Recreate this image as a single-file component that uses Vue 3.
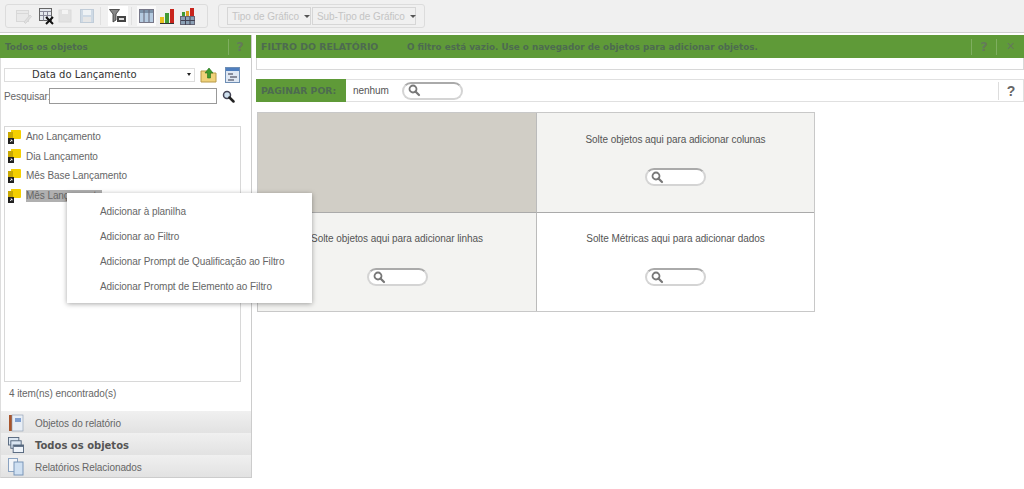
<script setup>
const objects = ['Ano Lançamento', 'Dia Lançamento', 'Mês Base Lançamento', 'Mês Lançamento']
const menuItems = [
  'Adicionar à planilha',
  'Adicionar ao Filtro',
  'Adicionar Prompt de Qualificação ao Filtro',
  'Adicionar Prompt de Elemento ao Filtro',
]
</script>

<template>
  <div class="page">
    <div class="toolbar">
      <div class="tool-group first">
        <svg class="tool t1" width="16" height="18" viewBox="0 0 16 18"><rect x=".5" y="3.500" width="12" height="11" fill="#e9e9e9" stroke="#d8d8d8"/><path d="M1 6.500h11" stroke="#d8d8d8"/><path d="M8 15l6-7 1.500 1.500-6 7z" fill="#e0e0e0" stroke="#d4d4d4"/></svg>
        <svg class="tool t2" width="16" height="18" viewBox="0 0 16 18"><rect x=".5" y="1.500" width="12" height="12" fill="#e4e8ee" stroke="#666"/><path d="M1 4.500h11M4.500 4.500v9M8.500 4.500v9M1 8.500h11" stroke="#889"/><path d="M7 10l7 7M14 10l-7 7" stroke="#111" stroke-width="2"/></svg>
        <svg class="tool t3" width="15" height="18" viewBox="0 0 15 18"><rect x="1" y="3" width="12" height="12" fill="#e2e2e2" stroke="#dadada"/><rect x="4" y="3" width="6" height="4" fill="#f4f4f4"/></svg>
        <svg class="tool t4" width="14" height="18" viewBox="0 0 14 18"><rect x=".5" y="2.500" width="13" height="13" fill="#cfdae5" stroke="#c0ccd8"/><rect x="3" y="3" width="8" height="5" fill="#eef2f5"/><rect x="3" y="10" width="8" height="5" fill="#e6e6e6"/></svg>
        <span class="sep sep-a"></span>
        <span class="tool-box filter-box">
          <svg width="18" height="14" viewBox="0 0 18 14"><path d="M.5.500h10L7 5v6L4 13V5z" fill="#888" stroke="#333" stroke-width=".8"/><rect x="8" y="7" width="9" height="6" fill="#444"/><rect x="10" y="9" width="5" height="2" fill="#ddd"/></svg>
        </span>
        <span class="sep sep-b"></span>
        <span class="tool-box">
          <svg width="15" height="14" viewBox="0 0 15 14"><rect x=".5" y=".5" width="14" height="13" fill="#b5cbe0" stroke="#778"/><rect x="1" y="1" width="13" height="3" fill="#7d93a9"/><path d="M5 1v12M10 1v12" stroke="#667"/></svg>
        </span>
        <svg class="tool t5" width="14" height="16" viewBox="0 0 14 16"><rect x="0" y="9" width="4" height="6" fill="#e8c020"/><rect x="5" y="5" width="4" height="10" fill="#3f9a35"/><rect x="10" y="1" width="4" height="14" fill="#c8241c"/><path d="M0 15.500h14" stroke="#333"/></svg>
        <svg class="tool t6" width="15" height="17" viewBox="0 0 15 17"><rect x=".5" y="8.500" width="14" height="8" fill="#8ba0b5" stroke="#667"/><path d="M1 12.500h14M5.500 9v8M10 9v8" stroke="#445"/><rect x="2" y="4" width="3" height="4" fill="#3f9a35"/><rect x="6" y="3" width="3" height="5" fill="#e0a020"/><rect x="10" y="0" width="4" height="8" fill="#c8241c"/></svg>
      </div>
      <div class="tool-group second">
        <span class="chart-select first-select">Tipo de Gráfico<i class="caret"></i></span>
        <span class="chart-select second-select">Sub-Tipo de Gráfico<i class="caret"></i></span>
      </div>
    </div>

    <div class="main">
      <aside class="left">
        <div class="green-bar left-head">
          <span class="green-title">Todos os objetos</span>
          <span class="bar-help">?</span>
        </div>
        <div class="left-controls">
          <div class="ctrl-row">
            <div class="dropdown">Data do Lançamento<i class="small-caret"></i></div>
            <svg class="folder" width="17" height="16" viewBox="0 0 17 16"><path d="M1 4h6l1 2h8v9H1z" fill="#f0d27a" stroke="#b89a48"/><path d="M9 1l4 5h-2.500v5h-3V6H5z" fill="#3e9a2c" stroke="#24701a" stroke-width=".6"/></svg>
            <svg class="tree" width="15" height="16" viewBox="0 0 15 16"><rect x=".5" y=".5" width="14" height="15" fill="#dfe8f4" stroke="#6f8fb5"/><rect x="1" y="1" width="13" height="3" fill="#4f7fbf"/><path d="M3 7h5M5 10h7M3 13h6" stroke="#334" stroke-width="1"/></svg>
          </div>
          <div class="ctrl-row search-row">
            <label class="search-label">Pesquisar:</label>
            <div class="search-input"></div>
            <svg class="loupe" width="13" height="13" viewBox="0 0 13 13"><circle cx="5" cy="5" r="3.500" fill="#cfe0ee" stroke="#445" stroke-width="1.500"/><path d="M7.500 7.500l4 4" stroke="#222" stroke-width="2.500" stroke-linecap="round"/></svg>
          </div>
        </div>
        <div class="object-list">
          <div v-for="(item, i) in objects" :key="item" class="object-row">
            <svg width="15" height="16" viewBox="0 0 15 16"><path d="M4 1h9a1 1 0 0 1 1 1v7a1 1 0 0 1-1 1H4z" fill="#f4cf00"/><rect x="1" y="3" width="5" height="12" fill="#c9a800"/><rect x="1" y="9" width="6" height="6" fill="#222"/><path d="M3 13l2-2m-1.500 0H5v1.500" stroke="#fff" stroke-width=".8" fill="none"/></svg>
            <span class="object-name" :class="{ selected: i === 3 }">{{ item }}</span>
          </div>
        </div>
        <div class="count">4 item(ns) encontrado(s)</div>
        <div class="tabs">
          <div class="tab">
            <svg width="16" height="18" viewBox="0 0 16 18"><rect x="1" y="1" width="14" height="16" fill="#a8552c"/><rect x="4" y="1" width="11" height="16" fill="#e8eef6" stroke="#8a9ab0" stroke-width=".6"/><rect x="7" y="4" width="6" height="4" fill="#7f9fd0"/></svg>
            <span>Objetos do relatório</span>
          </div>
          <div class="tab strong">
            <svg width="16" height="16" viewBox="0 0 17 17"><rect x=".5" y=".5" width="11" height="8" fill="#dbe6f2" stroke="#55677d"/><rect x="3" y="4" width="11" height="8" fill="#dbe6f2" stroke="#55677d"/><rect x="5.500" y="8.500" width="11" height="8" fill="#eef3f9" stroke="#55677d"/><path d="M6 9.500h10" stroke="#55677d" stroke-width="2"/></svg>
            <span>Todos os objetos</span>
          </div>
          <div class="tab">
            <svg width="16" height="18" viewBox="0 0 16 18"><rect x=".5" y=".5" width="9" height="13" fill="#f2f5f9" stroke="#8aa2c0"/><rect x="6" y="4" width="9" height="13" fill="#cfe0f2" stroke="#7a96b8"/></svg>
            <span>Relatórios Relacionados</span>
          </div>
        </div>

        <div class="context-menu">
          <div v-for="item in menuItems" :key="item" class="menu-item">{{ item }}</div>
        </div>
      </aside>

      <section class="right">
        <div class="green-bar filter-head">
          <span class="green-title caps">FILTRO DO RELATÓRIO</span>
          <span class="green-title filter-msg">O filtro está vazio. Use o navegador de objetos para adicionar objetos.</span>
          <span class="bar-help push">?</span>
          <span class="bar-help close">✕</span>
        </div>
        <div class="filter-body"></div>
        <div class="pager">
          <span class="pager-label">PAGINAR POR:</span>
          <span class="pager-value">nenhum</span>
          <span class="pill pager-pill">
            <svg width="13" height="13" viewBox="0 0 13 13"><circle cx="5" cy="5" r="3.500" fill="none" stroke="#777" stroke-width="1.800"/><path d="M7.500 7.500l3.500 3.500" stroke="#777" stroke-width="2.200" stroke-linecap="round"/></svg>
          </span>
          <span class="pager-help">?</span>
        </div>
        <div class="drop-grid">
          <div class="cell corner"></div>
          <div class="cell soft">
            <p>Solte objetos aqui para adicionar colunas</p>
            <span class="pill">
              <svg width="13" height="13" viewBox="0 0 13 13"><circle cx="5" cy="5" r="3.500" fill="none" stroke="#777" stroke-width="1.800"/><path d="M7.500 7.500l3.500 3.500" stroke="#777" stroke-width="2.200" stroke-linecap="round"/></svg>
            </span>
          </div>
          <div class="cell soft">
            <p>Solte objetos aqui para adicionar linhas</p>
            <span class="pill">
              <svg width="13" height="13" viewBox="0 0 13 13"><circle cx="5" cy="5" r="3.500" fill="none" stroke="#777" stroke-width="1.800"/><path d="M7.500 7.500l3.500 3.500" stroke="#777" stroke-width="2.200" stroke-linecap="round"/></svg>
            </span>
          </div>
          <div class="cell">
            <p>Solte Métricas aqui para adicionar dados</p>
            <span class="pill">
              <svg width="13" height="13" viewBox="0 0 13 13"><circle cx="5" cy="5" r="3.500" fill="none" stroke="#777" stroke-width="1.800"/><path d="M7.500 7.500l3.500 3.500" stroke="#777" stroke-width="2.200" stroke-linecap="round"/></svg>
            </span>
          </div>
        </div>
      </section>
    </div>
  </div>
</template>

<style>
html, body {
  margin: 0;
  background: #fff;
  overflow: hidden;
}
</style>

<style scoped>
.page {
  width: 1024px;
  height: 489px;
  font-family: "Liberation Sans", Arial, sans-serif;
  font-size: 10px;
  letter-spacing: -0.07px;
  color: #555;
  display: flex;
  flex-direction: column;
}

.toolbar {
  height: 33px;
  box-sizing: border-box;
  background: #f0f0f0;
  border-bottom: 1px solid #cfcfcf;
  display: flex;
  padding: 4px 0 0 5px;
  flex-shrink: 0;
}

.tool-group {
  height: 24px;
  box-sizing: border-box;
  border: 1px solid #dcdcdc;
  border-radius: 3px;
  display: flex;
  align-items: center;
}

.tool-group.first {
  width: 203px;
  padding-left: 10px;
}

.tool-group.second {
  width: 207px;
  margin-left: 10px;
  padding-left: 8px;
}

.tool {
  flex-shrink: 0;
}

.t2 { margin-left: 7px; }
.t3 { margin-left: 3px; }
.t4 { margin-left: 7px; }
.t5 { margin-left: 4px; }
.t6 { margin-left: 6px; }

.sep {
  width: 1px;
  height: 18px;
  background: #e0e0e0;
}

.sep-a { margin: 0 7px 0 6px; }
.sep-b { margin: 0 5px 0 3px; }

.tool-box {
  width: 19px;
  height: 20px;
  display: flex;
  align-items: center;
  justify-content: center;
  background: #fbfbfb;
}

.filter-box {
  width: 20px;
  background: #fff;
}

.chart-select {
  height: 18px;
  box-sizing: border-box;
  border: 1px solid #d6d6d6;
  color: #c4c4c4;
  display: flex;
  align-items: center;
  padding-left: 4px;
  gap: 5px;
  white-space: nowrap;
}

.first-select {
  width: 84px;
}

.second-select {
  width: 104px;
  margin-left: 1px;
}

.caret {
  border: 3px solid transparent;
  border-top: 3px solid #555;
  border-bottom: 0;
}

.main {
  flex: 1;
  display: flex;
  padding-top: 2px;
  min-height: 0;
}

.left {
  position: relative;
  width: 252px;
  height: 443px;
  box-sizing: border-box;
  border-right: 1px solid #ccc;
  border-left: 1px solid #ddd;
  border-bottom: 1px solid #ccc;
  display: flex;
  flex-direction: column;
  flex-shrink: 0;
}

.green-bar {
  background: #5f9a38;
  height: 23px;
  display: flex;
  align-items: center;
  flex-shrink: 0;
}

.left-head {
  margin-left: -1px;
  padding-left: 5px;
  justify-content: space-between;
}

.green-title {
  font-family: "DejaVu Sans", sans-serif;
  font-size: 8.8px;
  letter-spacing: 0;
  color: #4d6b50;
  font-weight: 700;
  white-space: nowrap;
}

.bar-help {
  color: #647a5a;
  font-family: "DejaVu Sans", sans-serif;
  font-size: 13px;
  font-weight: 700;
  width: 22px;
  text-align: center;
  border-left: 1px solid #7fae60;
  line-height: 16px;
}

.left-controls {
  padding: 9px 0 0 3px;
}

.ctrl-row {
  display: flex;
  align-items: center;
}

.dropdown {
  position: relative;
  width: 191px;
  height: 14px;
  box-sizing: border-box;
  border: 1px solid #ddd;
  font-family: "DejaVu Sans", sans-serif;
  font-size: 10px;
  letter-spacing: 0;
  color: #333;
  padding-left: 27px;
  line-height: 12px;
}

.small-caret {
  position: absolute;
  right: 3px;
  top: 4px;
  border: 2px solid transparent;
  border-top: 3px solid #222;
  border-bottom: 0;
}

.folder {
  margin-left: 5px;
}

.tree {
  margin-left: 8px;
}

.search-row {
  margin-top: 5px;
}

.search-label {
  color: #666;
  width: 45px;
  white-space: nowrap;
}

.search-input {
  width: 168px;
  height: 16px;
  box-sizing: border-box;
  border: 1px solid #999;
  background: #fff;
}

.loupe {
  margin-left: 5px;
}

.object-list {
  margin: 22px 0 0 3px;
  width: 237px;
  height: 256px;
  box-sizing: border-box;
  border: 1px solid #d8d8d8;
  flex-shrink: 0;
}

.object-row {
  height: 19.600px;
  display: flex;
  align-items: center;
  gap: 4px;
  padding-left: 2px;
  color: #666;
}

.object-name.selected {
  background: #b0b0b0;
  line-height: 12px;
  white-space: nowrap;
}

.count {
  padding: 6px 0 0 8px;
  height: 25px;
  color: #666;
}

.tabs {
  margin-top: auto;
}

.tab {
  height: 22px;
  box-sizing: border-box;
  padding: 2px 0 0 7px;
  display: flex;
  align-items: center;
  gap: 11px;
  color: #666;
  background: linear-gradient(#f0f0f0, #e2e2e2);
}

.tab.strong {
  font-family: "DejaVu Sans", sans-serif;
  font-size: 10px;
  letter-spacing: 0;
  font-weight: 700;
  color: #555;
}

.context-menu {
  position: absolute;
  left: 66px;
  top: 158px;
  width: 245px;
  height: 110px;
  box-sizing: border-box;
  padding-top: 6px;
  background: #fff;
  box-shadow: 0 1px 5px rgba(0, 0, 0, 0.35);
}

.menu-item {
  height: 25px;
  line-height: 25px;
  padding-left: 33px;
  color: #666;
  white-space: nowrap;
}

.right {
  flex: 1;
  margin-left: 4px;
  min-width: 0;
  display: flex;
  flex-direction: column;
}

.filter-head {
  padding-left: 5px;
}

.caps {
  width: 146px;
  font-size: 9.400px;
}

.push {
  margin-left: auto;
  width: 24px;
}

.close {
  font-size: 11px;
  width: 27px;
}

.filter-body {
  height: 11px;
  border: 1px solid #d8d8d8;
  border-top: 0;
  flex-shrink: 0;
}

.pager {
  margin-top: 9px;
  height: 23px;
  box-sizing: border-box;
  border: 1px solid #e0e0e0;
  border-left: 0;
  display: flex;
  align-items: center;
  flex-shrink: 0;
}

.pager-label {
  background: #5f9a38;
  font-family: "DejaVu Sans", sans-serif;
  font-size: 9.300px;
  letter-spacing: 0;
  color: #4d6b50;
  font-weight: 700;
  width: 90px;
  height: 23px;
  line-height: 23px;
  padding-left: 5px;
  box-sizing: border-box;
  white-space: nowrap;
}

.pager-value {
  color: #555;
  margin-left: 7px;
  width: 49px;
}

.pill {
  width: 61px;
  height: 18px;
  box-sizing: border-box;
  border: 2px solid #d4d4d4;
  border-top-color: #aaa;
  border-radius: 9px;
  background: #fff;
  display: flex;
  align-items: center;
  padding-left: 4px;
}

.pager-help {
  margin-left: auto;
  width: 24px;
  text-align: center;
  border-left: 1px solid #ddd;
  color: #666;
  font-size: 14px;
  font-weight: 700;
  line-height: 18px;
}

.drop-grid {
  margin: 10px 0 0 1px;
  width: 558px;
  height: 200px;
  box-sizing: border-box;
  display: grid;
  grid-template-columns: 279px 277px;
  grid-template-rows: 100px 98px;
  border: 1px solid #c8c8c8;
  flex-shrink: 0;
}

.cell {
  display: flex;
  flex-direction: column;
  align-items: center;
  padding-top: 21px;
  box-sizing: border-box;
}

.cell:nth-child(1), .cell:nth-child(3) {
  border-right: 1px solid #bbb;
}

.cell:nth-child(1), .cell:nth-child(2) {
  border-bottom: 1px solid #aaa;
}

.cell:nth-child(3), .cell:nth-child(4) {
  padding-top: 20px;
}

.cell p {
  margin: 0 0 22px;
  line-height: 12px;
  color: #555;
  white-space: nowrap;
}

.cell:nth-child(3) p, .cell:nth-child(4) p {
  margin-bottom: 23px;
}

.corner {
  background: #d1cec6;
}

.soft {
  background: #f3f3f1;
}
</style>
